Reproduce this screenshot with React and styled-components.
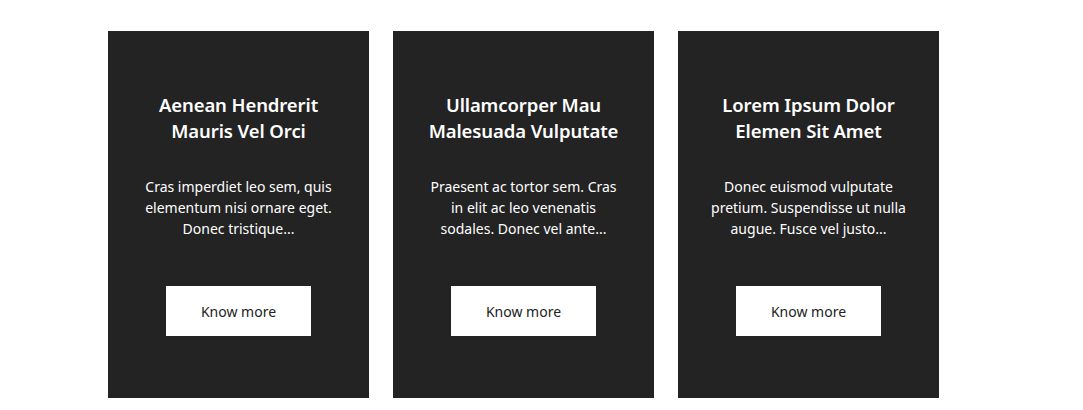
import styled, { createGlobalStyle } from "styled-components";

const GlobalStyle = createGlobalStyle`
  body {
    margin: 0;
    background: #fff;
    font-family: "Noto Sans", "Open Sans", sans-serif;
  }
`;

const cards = [
  {
    title: "Aenean Hendrerit Mauris Vel Orci",
    text: "Cras imperdiet leo sem, quis elementum nisi ornare eget. Donec tristique...",
  },
  {
    title: "Ullamcorper Mau Malesuada Vulputate",
    text: "Praesent ac tortor sem. Cras in elit ac leo venenatis sodales. Donec vel ante...",
  },
  {
    title: "Lorem Ipsum Dolor Elemen Sit Amet",
    text: "Donec euismod vulputate pretium. Suspendisse ut nulla augue. Fusce vel justo...",
  },
];

const App = () => {
  return (
    <>
      <GlobalStyle />
      <Section>
        <CardRow>
          {cards.map((card) => (
            <Card key={card.title}>
              <Title>{card.title}</Title>
              <Text>{card.text}</Text>
              <MoreButton>Know more</MoreButton>
            </Card>
          ))}
        </CardRow>
      </Section>
    </>
  );
};

export default App;

const Section = styled.section`
  padding: 31px 0 12px 108px;
`;

const CardRow = styled.div`
  display: flex;
  gap: 24px;
`;

const Card = styled.div`
  width: 261px;
  height: 367px;
  box-sizing: border-box;
  padding: 61px 26px 0;
  background-color: #232323;
  color: #fff;
  display: flex;
  flex-direction: column;
  align-items: center;
  text-align: center;
`;

const Title = styled.h3`
  margin: 0;
  font-size: 18.5px;
  font-weight: 600;
  line-height: 26px;
  letter-spacing: -0.1px;
`;

const Text = styled.p`
  margin: 32px 0 0;
  width: 201px;
  font-size: 14px;
  line-height: 21px;
`;

const MoreButton = styled.button`
  margin-top: 47px;
  width: 145px;
  height: 50px;
  border: none;
  background: #fff;
  color: #222;
  font-family: inherit;
  font-size: 14px;
  cursor: pointer;
`;
